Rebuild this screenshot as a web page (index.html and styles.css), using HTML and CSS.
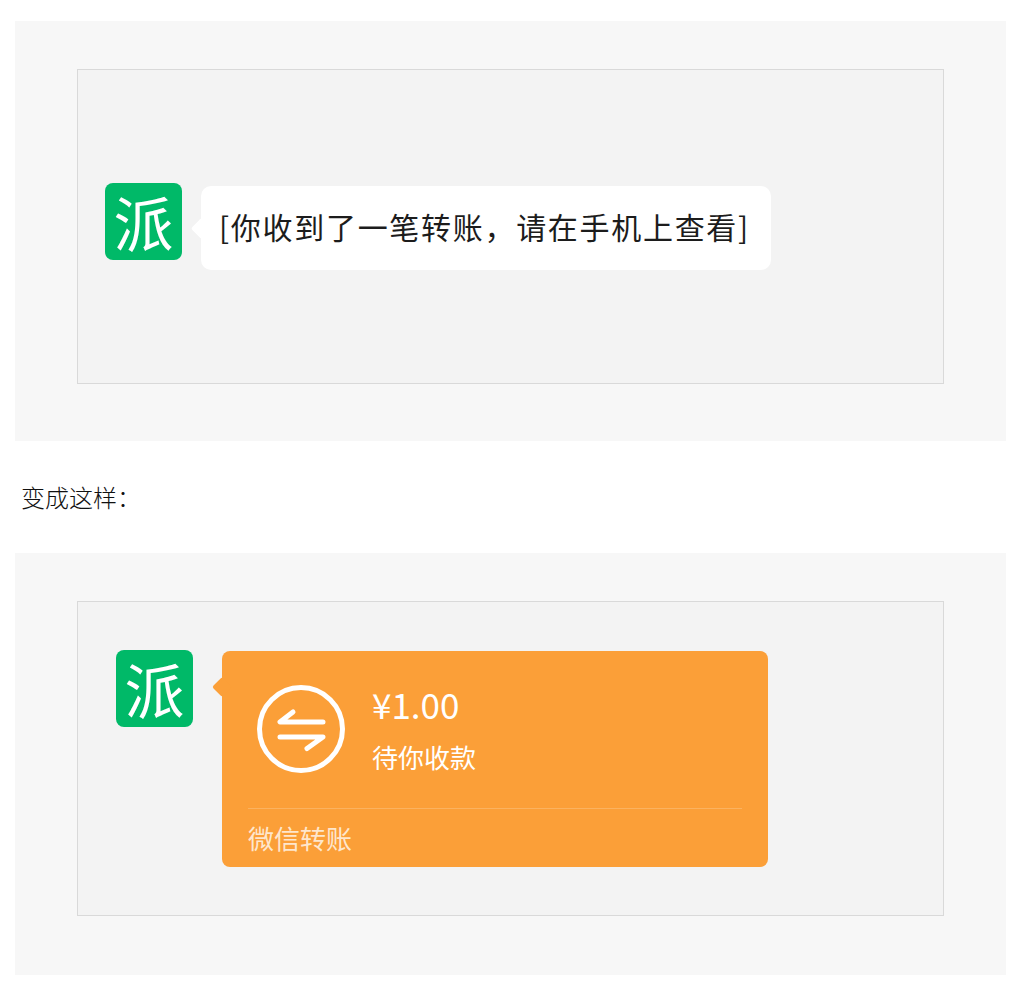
FILE: index.html
```html
<!DOCTYPE html>
<html>

<head>
    <meta charset="UTF-8">
    <title>转账消息</title>
    <link rel="stylesheet" href="styles.css">
</head>

<body>
    <section class="shot">
        <div class="chat chat-before">
            <div class="avatar">派</div>
            <div class="bubble">[你收到了一笔转账，请在手机上查看]</div>
        </div>
    </section>

    <p class="note">变成这样：</p>

    <section class="shot shot-tall">
        <div class="chat chat-after">
            <div class="avatar">派</div>
            <div class="card">
                <div class="card-main">
                    <svg class="card-icon" viewBox="0 0 88 88" fill="none" stroke="#fff" stroke-width="5" stroke-linecap="round" stroke-linejoin="round">
                        <circle cx="44" cy="44" r="41.500"></circle>
                        <path d="M36 27 L23 37 H66"></path>
                        <path d="M23 52 H66 L50 63.500"></path>
                    </svg>
                    <div class="card-text">
                        <div class="amount">¥1.00</div>
                        <div class="status">待你收款</div>
                    </div>
                </div>
                <div class="card-foot">微信转账</div>
            </div>
        </div>
    </section>
</body>

</html>
```
FILE: styles.css
```css
body {
    margin: 0;
    padding: 21px 14px 0 15px;
    background-color: #fff;
    font-family: "Noto Sans CJK SC", "Noto Sans", sans-serif;
}

.shot {
    background-color: #f7f7f7;
    padding: 48px 62px 57px;
}

.shot-tall {
    padding-bottom: 59px;
}

.chat {
    display: flex;
    align-items: flex-start;
    box-sizing: border-box;
    height: 315px;
    background-color: #f3f3f3;
    border: 1px solid #d9d9d9;
}

.chat-before {
    padding: 113px 0 0 27px;
}

.chat-after {
    padding: 48px 0 0 38px;
}

.avatar {
    flex: none;
    width: 77px;
    height: 77px;
    border-radius: 8px;
    background-color: #00b968;
    color: #fff;
    font-size: 60px;
    font-weight: 400;
    line-height: 75px;
    text-align: center;
}

.bubble {
    position: relative;
    margin: 3px 0 0 19px;
    width: 570px;
    height: 84px;
    box-sizing: border-box;
    padding-left: 18px;
    border-radius: 10px;
    background-color: #fff;
    color: #1c1c1c;
    font-size: 30px;
    letter-spacing: 1.700px;
    line-height: 81px;
    white-space: nowrap;
}

.bubble::before,
.card::before {
    content: "";
    position: absolute;
    border-radius: 2px;
    transform: rotate(45deg);
}

.bubble::before {
    top: 35px;
    left: -7px;
    width: 15px;
    height: 15px;
    background-color: #fff;
}

.card {
    position: relative;
    margin: 1px 0 0 29px;
    width: 546px;
    height: 216px;
    border-radius: 8px;
    background-color: #fb9f38;
    color: #fff;
}

.card::before {
    top: 29px;
    left: -7px;
    width: 14px;
    height: 14px;
    background-color: #fb9f38;
}

.card-main {
    display: flex;
    height: 157px;
    box-sizing: border-box;
    padding: 34px 0 0 35px;
}

.card-icon {
    flex: none;
    width: 88px;
    height: 88px;
}

.card-text {
    margin-left: 27px;
}

.amount {
    margin-top: -4px;
    font-size: 35px;
    line-height: 46px;
}

.status {
    margin-top: 10px;
    font-size: 26px;
    line-height: 40px;
}

.card-foot {
    margin: 0 26px;
    border-top: 1px solid rgba(255, 255, 255, 0.2);
    color: rgba(255, 255, 255, 0.76);
    font-size: 26px;
    line-height: 58px;
}

.note {
    margin: 0;
    height: 112px;
    padding-left: 6px;
    color: #111;
    font-size: 24px;
    font-weight: 300;
    line-height: 111px;
}
```
